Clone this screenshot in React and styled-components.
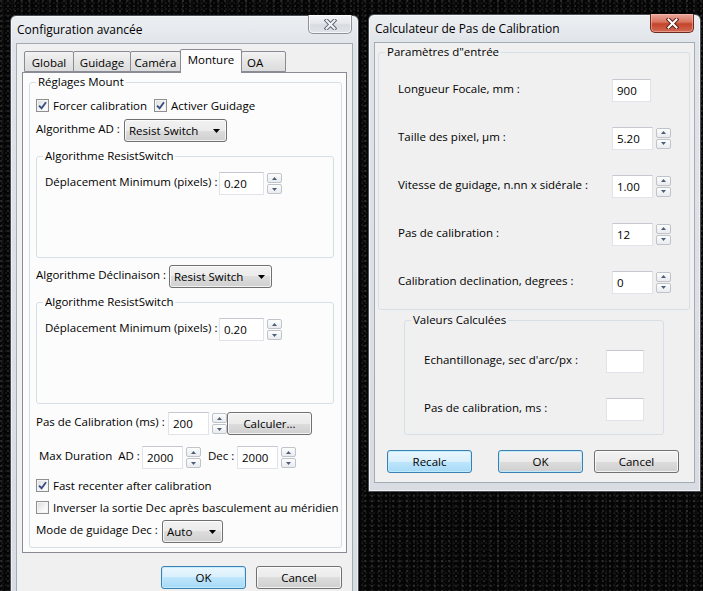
import React from 'react';
import styled, { createGlobalStyle } from 'styled-components';

const GlobalStyle = createGlobalStyle`
  html, body { margin: 0; padding: 0; }
  body {
    background: #000;
    font-family: "Open Sans", "Noto Sans", "DejaVu Sans", sans-serif;
    font-size: 11.5px;
    color: #000;
  }
  * { box-sizing: border-box; }
`;

const Desktop = styled.div`
  position: relative;
  width: 703px;
  height: 591px;
  overflow: hidden;
  background-color: #050505;
  background-image:
    radial-gradient(circle at 1px 1px, rgba(190, 190, 190, 0.22) 0.6px, transparent 1px),
    radial-gradient(circle at 2px 3px, rgba(150, 150, 150, 0.14) 0.6px, transparent 1px),
    radial-gradient(circle at 3px 1px, rgba(120, 120, 120, 0.14) 0.5px, transparent 1px);
  background-size: 7px 5px, 4px 6px, 9px 3px;
`;

const Win = styled.div`
  position: absolute;
  left: ${(p) => p.$x}px;
  top: ${(p) => p.$y}px;
  width: ${(p) => p.$w}px;
  height: ${(p) => p.$h}px;
  display: flex;
  flex-direction: column;
  padding: 0 5px 8px;
  border: 1px solid #4a4f57;
  border-radius: 6px 6px 0 0;
  background: linear-gradient(#eceff2, #e0e4e9 30px, #d9dde3);
  box-shadow: inset 0 0 0 1px rgba(255, 255, 255, 0.55);
`;

const TitleBar = styled.div`
  flex: none;
  height: 27px;
  display: flex;
  align-items: center;
  justify-content: space-between;
  padding-left: 1px;
`;

const Title = styled.div`
  font-size: 12px;
  padding-bottom: 1px;
`;

const CloseBtn = styled.div`
  align-self: flex-start;
  margin-top: -1px;
  margin-right: 1px;
  width: 44px;
  height: 19px;
  border: 1px solid ${(p) => (p.$active ? '#6b2a20' : '#8c939c')};
  border-top: none;
  border-radius: 0 0 5px 5px;
  background: ${(p) =>
    p.$active
      ? 'linear-gradient(#e9a99c, #d8735e 45%, #c5432b 55%, #d26a52)'
      : 'linear-gradient(#f3f4f6, #e5e8ec 45%, #d8dce1 55%, #e1e4e8)'};
  box-shadow: inset 0 0 0 1px ${(p) => (p.$active ? 'rgba(255,200,190,.5)' : 'rgba(255,255,255,.7)')};
  display: flex;
  align-items: center;
  justify-content: center;
`;

const Client = styled.div`
  flex: 1;
  min-height: 0;
  display: flex;
  flex-direction: column;
  background: #f0f0f0;
  border: 1px solid #a3abb5;
`;

const LeftClient = styled(Client)`
  padding: 5px;
`;

const RightClient = styled(Client)`
  padding: 1px 4px 0 3px;
`;

/* Tabs */
const TabControl = styled.div`
  display: flex;
  flex-direction: column;
`;

const TabStrip = styled.div`
  height: 23px;
  display: flex;
  align-items: flex-end;
  padding-left: 2px;
`;

const Tab = styled.div`
  width: ${(p) => p.$w}px;
  height: ${(p) => (p.$sel ? 24 : 21)}px;
  margin-left: -1px;
  margin-bottom: ${(p) => (p.$sel ? -1 : 0)}px;
  padding: ${(p) => (p.$sel ? 2 : 3)}px 0 0 ${(p) => (p.$left ? 5 : 0)}px;
  border: 1px solid #898c95;
  border-bottom: ${(p) => (p.$sel ? 'none' : '1px solid #898c95')};
  border-radius: 2px 2px 0 0;
  background: ${(p) => (p.$sel ? '#fcfcfc' : 'linear-gradient(#f3f3f3, #e6e6e6 50%, #dcdcdc)')};
  position: relative;
  z-index: ${(p) => (p.$sel ? 1 : 0)};
  font-size: 11.5px;
  line-height: 15px;
  text-align: ${(p) => (p.$left ? 'left' : 'center')};
  white-space: nowrap;
  &:first-child { margin-left: 0; }
`;

const TabPanel = styled.div`
  height: 481px;
  border: 1px solid #898c95;
  background: #fcfcfc;
  padding: 1px 4px 0 6px;
`;

/* Group boxes */
const Group = styled.fieldset`
  margin: 0;
  padding: 0;
  min-width: 0;
  border: 1px solid #d5dfe5;
  border-radius: 3px;
`;

const Legend = styled.legend`
  margin-left: ${(p) => p.$off ?? 5}px;
  padding: 0 2px;
  font-size: 11.5px;
  line-height: 16px;
`;

const MountGroup = styled(Group)`
  height: 474px;
`;

const MountBody = styled.div`
  display: flex;
  flex-direction: column;
  padding: 0 7px 0 6px;
`;

const AlgoGroup = styled(Group)`
  height: 110px;
  margin-top: ${(p) => p.$mt}px;
`;

const AlgoBody = styled.div`
  padding: 8px 0 0 8px;
`;

const ParamGroup = styled(Group)`
  height: 266px;
`;

const ParamBody = styled.div`
  display: grid;
  grid-auto-rows: 48px;
  padding: 6px 0 0 19px;
`;

const ValuesGroup = styled(Group)`
  height: 123px;
  margin: 2px 26px 0 26px;
`;

const ValuesBody = styled.div`
  display: grid;
  grid-auto-rows: 48px;
  padding: 9px 0 0 19px;
`;

/* Rows */
const FieldRow = styled.div`
  display: flex;
  align-items: center;
  height: ${(p) => p.$h ?? 23}px;
  margin-top: ${(p) => p.$mt ?? 0}px;
  padding-left: ${(p) => p.$pl ?? 0}px;
`;

const FieldLabel = styled.div`
  width: ${(p) => p.$w}px;
  flex: none;
  margin-bottom: 4px;
  padding-left: ${(p) => p.$pl ?? 0}px;
  white-space: nowrap;
  font-size: 11.5px;
`;

const CheckRow = styled.div`
  display: flex;
  align-items: center;
  gap: 7px;
  height: 16px;
  margin-top: ${(p) => p.$mt ?? 0}px;
`;

const CheckItem = styled.div`
  display: flex;
  align-items: center;
  gap: 4px;
  white-space: nowrap;
  font-size: 11.5px;
`;

const CheckBoxOuter = styled.div`
  width: 13px;
  height: 13px;
  flex: none;
  border: 1px solid #8e8f8f;
  background: linear-gradient(135deg, #d8d9db, #f6f6f6 60%, #ffffff);
  box-shadow: inset 0 0 0 1px #f4f4f4;
  display: flex;
  align-items: center;
  justify-content: center;
`;

const TextBox = styled.div`
  width: ${(p) => p.$w}px;
  height: 23px;
  flex: none;
  background: #fff;
  border: 1px solid #e2e3ea;
  border-top-color: #c5c8ce;
  padding-left: 4px;
  display: flex;
  align-items: center;
  font-size: 11.5px;
`;

const SpinWrap = styled.div`
  display: flex;
  align-items: center;
  gap: ${(p) => p.$gap ?? 3}px;
`;

const Spinner = styled.div`
  display: flex;
  flex-direction: column;
  gap: 1px;
`;

const SpinBtn = styled.div`
  width: 15px;
  height: 10px;
  border: 1px solid #bfc4cb;
  border-radius: 2px;
  background: linear-gradient(#fdfdfd, #e9ebee);
  display: flex;
  align-items: center;
  justify-content: center;
`;

const Combo = styled.div`
  width: ${(p) => p.$w}px;
  height: 23px;
  flex: none;
  border: 1px solid #707070;
  border-radius: 3px;
  background: linear-gradient(#f2f2f2 0%, #ebebeb 50%, #dddddd 50%, #cfcfcf 100%);
  box-shadow: inset 0 0 0 1px rgba(255, 255, 255, 0.75);
  display: flex;
  align-items: center;
  justify-content: space-between;
  padding: 0 6px 0 4px;
  font-size: 11.5px;
`;

const Button = styled.div`
  width: ${(p) => p.$w ?? 85}px;
  height: 23px;
  flex: none;
  border: 1px solid ${(p) => (p.$variant === 'blue' || p.$variant === 'default' ? '#3c7fb1' : '#707070')};
  border-radius: 3px;
  background: ${(p) =>
    p.$variant === 'blue'
      ? 'linear-gradient(#eaf6fd 0%, #d9f0fc 50%, #bee6fd 50%, #a7d9f5 100%)'
      : 'linear-gradient(#f2f2f2 0%, #ebebeb 50%, #dddddd 50%, #cfcfcf 100%)'};
  box-shadow: inset 0 0 0 1px ${(p) => (p.$variant === 'blue' || p.$variant === 'default' ? 'rgba(190,235,255,0.9)' : 'rgba(255,255,255,0.75)')};
  display: flex;
  align-items: center;
  justify-content: center;
  padding-bottom: 1px;
  font-size: 11.5px;
`;

const RecalcButton = styled(Button)`
  margin-right: 15px;
`;

const LeftButtons = styled.div`
  display: flex;
  justify-content: flex-end;
  gap: 10px;
  margin-top: 13px;
  padding-right: 5px;
`;

const RightButtons = styled.div`
  display: flex;
  margin-top: 15px;
  padding-left: 9px;
  gap: 11px;
`;

/* Glyphs */
const CloseGlyph = ({ active }) => (
  <svg width="13" height="11" viewBox="0 0 13 11">
    <path d="M2.5 1.5 L10.5 9.5 M10.5 1.5 L2.5 9.5" stroke={active ? '#5a2118' : '#5f6873'} strokeWidth="4" strokeLinecap="square" fill="none" />
    <path d="M2.5 1.5 L10.5 9.5 M10.5 1.5 L2.5 9.5" stroke={active ? '#ffffff' : '#f2f4f7'} strokeWidth="2" strokeLinecap="square" fill="none" />
  </svg>
);

const Check = ({ checked }) => (
  <CheckBoxOuter>
    {checked && (
      <svg width="9" height="9" viewBox="0 0 9 9">
        <path d="M1 4.6 L3.6 7.2 L8 1.3" stroke="#3b4f80" strokeWidth="1.9" fill="none" />
      </svg>
    )}
  </CheckBoxOuter>
);

const Arrow = ({ down }) => (
  <svg width="5" height="3" viewBox="0 0 5 3">
    <path d={down ? 'M0 0 H5 L2.5 3 Z' : 'M0 3 H5 L2.5 0 Z'} fill="#4d5d78" />
  </svg>
);

const ComboArrow = () => (
  <svg width="7" height="4" viewBox="0 0 7 4">
    <path d="M0 0 H7 L3.5 4 Z" fill="#000" />
  </svg>
);

const Spin = ({ value, w, gap }) => (
  <SpinWrap $gap={gap}>
    <TextBox $w={w}>{value}</TextBox>
    <Spinner>
      <SpinBtn><Arrow /></SpinBtn>
      <SpinBtn><Arrow down /></SpinBtn>
    </Spinner>
  </SpinWrap>
);

const DropDown = ({ w, children }) => (
  <Combo $w={w}>
    <span>{children}</span>
    <ComboArrow />
  </Combo>
);

const tabs = [
  { label: 'Global', w: 50 },
  { label: 'Guidage', w: 58 },
  { label: 'Caméra', w: 51 },
  { label: 'Monture', w: 62, sel: true },
  { label: 'OA', w: 45, left: true },
];

const params = [
  { label: 'Longueur Focale, mm :', value: '900', spin: false },
  { label: 'Taille des pixel, µm :', value: '5.20', spin: true },
  { label: 'Vitesse de guidage, n.nn x sidérale :', value: '1.00', spin: true },
  { label: 'Pas de calibration :', value: '12', spin: true },
  { label: 'Calibration declination, degrees :', value: '0', spin: true },
];

export default function App() {
  return (
    <Desktop>
      <GlobalStyle />
      <Win $x={10} $y={15} $w={349} $h={600}>
        <TitleBar>
          <Title>Configuration avancée</Title>
          <CloseBtn><CloseGlyph /></CloseBtn>
        </TitleBar>
        <LeftClient>
          <TabControl>
            <TabStrip>
              {tabs.map((t) => (
                <Tab key={t.label} $w={t.w} $sel={t.sel} $left={t.left}>{t.label}</Tab>
              ))}
            </TabStrip>
            <TabPanel>
              <MountGroup>
                <Legend $off={6}>Réglages Mount</Legend>
                <MountBody>
                  <CheckRow $mt={7}>
                    <CheckItem><Check checked />Forcer calibration</CheckItem>
                    <CheckItem><Check checked />Activer Guidage</CheckItem>
                  </CheckRow>
                  <FieldRow $mt={6}>
                    <FieldLabel $w={88}>Algorithme AD :</FieldLabel>
                    <DropDown w={103}>Resist Switch</DropDown>
                  </FieldRow>
                  <AlgoGroup $mt={6}>
                    <Legend $off={6}>Algorithme ResistSwitch</Legend>
                    <AlgoBody>
                      <FieldRow>
                        <FieldLabel $w={174}>Déplacement Minimum (pixels) :</FieldLabel>
                        <Spin value="0.20" w={45} />
                      </FieldRow>
                    </AlgoBody>
                  </AlgoGroup>
                  <FieldRow $mt={7}>
                    <FieldLabel $w={133}>Algorithme Déclinaison :</FieldLabel>
                    <DropDown w={103}>Resist Switch</DropDown>
                  </FieldRow>
                  <AlgoGroup $mt={6}>
                    <Legend $off={6}>Algorithme ResistSwitch</Legend>
                    <AlgoBody>
                      <FieldRow>
                        <FieldLabel $w={174}>Déplacement Minimum (pixels) :</FieldLabel>
                        <Spin value="0.20" w={45} />
                      </FieldRow>
                    </AlgoBody>
                  </AlgoGroup>
                  <FieldRow $mt={8}>
                    <FieldLabel $w={132}>Pas de Calibration (ms) :</FieldLabel>
                    <Spin value="200" w={41} />
                    <Button $w={85}>Calculer...</Button>
                  </FieldRow>
                  <FieldRow $mt={11} $pl={3}>
                    <FieldLabel $w={103}>Max Duration&nbsp; AD :</FieldLabel>
                    <Spin value="2000" w={41} />
                    <FieldLabel $w={36} $pl={7}>Dec :</FieldLabel>
                    <Spin value="2000" w={41} />
                  </FieldRow>
                  <CheckRow $mt={8}>
                    <CheckItem><Check checked />Fast recenter after calibration</CheckItem>
                  </CheckRow>
                  <CheckRow $mt={6}>
                    <CheckItem><Check />Inverser la sortie Dec après basculement au méridien</CheckItem>
                  </CheckRow>
                  <FieldRow $mt={5}>
                    <FieldLabel $w={126}>Mode de guidage Dec :</FieldLabel>
                    <DropDown w={61}>Auto</DropDown>
                  </FieldRow>
                </MountBody>
              </MountGroup>
            </TabPanel>
          </TabControl>
          <LeftButtons>
            <Button $variant="blue">OK</Button>
            <Button $w={86}>Cancel</Button>
          </LeftButtons>
        </LeftClient>
      </Win>

      <Win $x={368} $y={14} $w={333} $h={478}>
        <TitleBar>
          <Title>Calculateur de Pas de Calibration</Title>
          <CloseBtn $active><CloseGlyph active /></CloseBtn>
        </TitleBar>
        <RightClient>
          <ParamGroup>
            <Legend $off={6}>Paramètres d"entrée</Legend>
            <ParamBody>
              {params.map((p) => (
                <FieldRow key={p.label} $h={48}>
                  <FieldLabel $w={214}>{p.label}</FieldLabel>
                  {p.spin ? <Spin value={p.value} w={41} /> : <TextBox $w={39}>{p.value}</TextBox>}
                </FieldRow>
              ))}
            </ParamBody>
          </ParamGroup>
          <ValuesGroup>
            <Legend $off={6}>Valeurs Calculées</Legend>
            <ValuesBody>
              <FieldRow $h={48}>
                <FieldLabel $w={182}>Echantillonage, sec d'arc/px :</FieldLabel>
                <TextBox $w={38} />
              </FieldRow>
              <FieldRow $h={48}>
                <FieldLabel $w={182}>Pas de calibration, ms :</FieldLabel>
                <TextBox $w={38} />
              </FieldRow>
            </ValuesBody>
          </ValuesGroup>
          <RightButtons>
            <RecalcButton $variant="blue">Recalc</RecalcButton>
            <Button $variant="default">OK</Button>
            <Button>Cancel</Button>
          </RightButtons>
        </RightClient>
      </Win>
    </Desktop>
  );
}
